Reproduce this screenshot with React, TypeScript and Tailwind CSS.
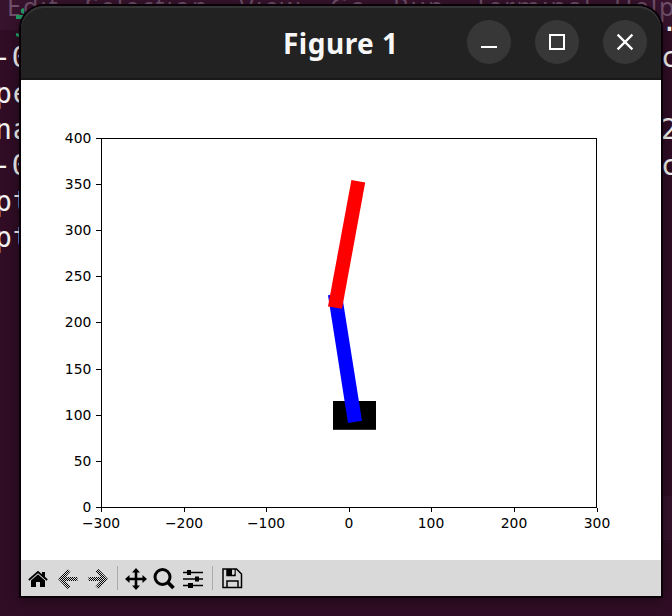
import React from "react";

const menu = [
  { label: "Edit", left: "left-[7px]" },
  { label: "Selection", left: "left-[85px]" },
  { label: "View", left: "left-[239px]" },
  { label: "Go", left: "left-[330px]" },
  { label: "Run", left: "left-[393px]" },
  { label: "Terminal", left: "left-[474px]" },
  { label: "Help", left: "left-[614px]" },
];

const code = [
  { text: "-0", pos: "left-[-6px] top-[40px]" },
  { text: "pe", pos: "left-[-5px] top-[76px]" },
  { text: "na", pos: "left-[-5px] top-[112px]" },
  { text: "-0", pos: "left-[-6px] top-[148px]" },
  { text: "pt", pos: "left-[-5px] top-[184px]" },
  { text: "pt", pos: "left-[-5px] top-[220px]" },
  { text: ".", pos: "left-[661px] top-[4px]" },
  { text: "c", pos: "left-[661px] top-[40px]" },
  { text: "2", pos: "left-[661px] top-[112px]" },
  { text: "c", pos: "left-[661px] top-[148px]" },
];

const yTicks = [0, 50, 100, 150, 200, 250, 300, 350, 400];
const xTicks = [-300, -200, -100, 0, 100, 200, 300];

function Backdrop() {
  return (
    <div className="absolute inset-0 bg-[#300d25]">
      <div className="h-[30px] bg-[#37132d]" />
      <div className="absolute right-0 top-[496px] h-[44px] w-[12px] bg-[#37132d]" />
      {menu.map((m) => (
        <span
          key={m.label}
          className={`absolute top-[-12px] whitespace-pre font-['Noto_Sans'] text-[25px] leading-[36px] tracking-[2px] text-[#70506a] ${m.left}`}
        >
          {m.label}
        </span>
      ))}
      <svg className="absolute left-[14px] top-[5px]" width="10" height="36" fill="#26a269">
        <circle cx="9.5" cy="6" r="2.7" />
        <path d="M2 10h7v4H2zM2 28l4 1 2 4-6-2z" />
      </svg>
      {code.map((c) => (
        <span
          key={c.pos}
          className={`absolute whitespace-pre font-['DejaVu_Sans_Mono',monospace] text-[28px] leading-[36px] tracking-[1px] text-[#f4f4f2] ${c.pos}`}
        >
          {c.text}
        </span>
      ))}
    </div>
  );
}

function TitleBar() {
  return (
    <header className="flex h-[74px] shrink-0 items-start justify-end gap-6 rounded-t-[23px] border-b-2 border-[#191919] bg-[#222222] pr-[14px] pt-[14px] shadow-[inset_0_2px_0_#353535]">
      <h1 className="mr-[44px] whitespace-pre pt-[3px] font-['Noto_Sans'] text-[28px] font-bold leading-[40px] text-[#f7f7f7]">
        <span className="inline-block w-[116px] tracking-[0.5px]">Figure 1</span>
      </h1>
      <button className="size-11 rounded-full bg-[#373737]">
        <svg width="44" height="44" fill="none" stroke="#fff" strokeWidth="2"><path d="M14 27h16" /></svg>
      </button>
      <button className="size-11 rounded-full bg-[#373737]">
        <svg width="44" height="44" fill="none" stroke="#fff" strokeWidth="2"><path d="M15 15h14v14H15z" /></svg>
      </button>
      <button className="size-11 rounded-full bg-[#373737]">
        <svg width="44" height="44" fill="none" stroke="#fff" strokeWidth="2.2"><path d="M14.6 14.6l14.8 14.8M29.4 14.6L14.6 29.4" /></svg>
      </button>
    </header>
  );
}

function Plot() {
  return (
    <svg className="block shrink-0 bg-white" width="640" height="480" viewBox="21 80 640 480">
      <rect x="333" y="401" width="43" height="28.8" />
      <path d="M328 295.2L341.7 293L362 420.8L348 423z" fill="#0000ff" />
      <path d="M351.4 180L365.2 182.5L342 308.8L328 306.5z" fill="#ff0000" />
      <path d="M101.5 138v370M596.5 138v370M101 138.5h496M101 507.500h496" fill="none" stroke="#000" />
      <g fontFamily="DejaVu Sans, sans-serif" fontSize="13.89">
        {yTicks.map((v) => {
          const y = Math.round(507 - v * 0.9233);
          return (
            <g key={v}>
              <path d={`M96 ${y + 0.5}h5`} stroke="#000" />
              <text x="91.3" y={y + 5} textAnchor="end">{v}</text>
            </g>
          );
        })}
        {xTicks.map((v) => {
          const x = Math.round(348.8 + v * 0.8258);
          return (
            <g key={v}>
              <path d={`M${x + 0.5} 508v4`} stroke="#000" />
              <text x={x} y="528" textAnchor="middle">{String(v).replace("-", "\u2212")}</text>
            </g>
          );
        })}
      </g>
    </svg>
  );
}

function Arrow({ flip = false }: { flip?: boolean }) {
  const id = flip ? "dots-forward" : "dots-back";
  return (
    <svg width="20" height="20" viewBox="0 0 20 20">
      <defs>
        <pattern id={id} width="2" height="2" patternUnits="userSpaceOnUse">
          <path d="M0 0h1v1H0zM1 1h1v1H1z" fill="#000" shapeRendering="crispEdges" />
        </pattern>
      </defs>
      <path
        d={flip ? "M20 10L10.500 0L7.500 2.500L12.500 8H0.500v4h12l-5 5.500l3 2.500z" : "M0 10L9.500 0L12.500 2.500L7.500 8h12v4h-12l5 5.500l-3 2.500z"}
        fill={`url(#${id})`}
      />
    </svg>
  );
}

function Toolbar() {
  return (
    <footer className="flex h-[36px] shrink-0 items-center bg-[#d9d9d9] pl-[7px]">
      <svg className="mt-px" width="20" height="20" viewBox="0 0 20 20">
        <path d="M10 5L17 11V18H12V13H8V18H3V11z" />
        <path d="M14 3h3v6l-3-3z" />
        <path d="M0.800 11L10 3L19.200 11" fill="none" stroke="#000" strokeWidth="1.700" />
        <path d="M2.500 11.500L10 5L17.500 11.500" fill="none" stroke="#d9d9d9" strokeWidth="0.700" />
      </svg>
      <div className="ml-[10px] mt-px h-5"><Arrow /></div>
      <div className="ml-[10px] mt-px h-5"><Arrow flip /></div>
      <div className="ml-[9px] h-6 w-px bg-[#aaa]" />
      <svg className="ml-[6px] mt-px" width="24" height="24" viewBox="0 0 24 24">
        <path d="M12 4v16M4 12h16" stroke="#000" strokeWidth="2.600" />
        <path d="M12 1l4 4.500H8zM12 23l4-4.500H8zM1 12l4.500-4v8zM23 12l-4.500-4v8z" />
      </svg>
      <svg className="ml-[5px] mt-px" width="22" height="22" viewBox="0 0 22 22" fill="none" stroke="#000">
        <circle cx="9.500" cy="9" r="7.500" strokeWidth="3" />
        <path d="M15 14.500l5.500 5.500" strokeWidth="3.800" />
      </svg>
      <svg className="ml-[8px] mt-px" width="20" height="20" viewBox="0 0 20 20">
        <path d="M0 3.500h20M0 10h20M0 16.500h20" stroke="#000" strokeWidth="1.400" />
        <path d="M4 1h4v5H4zM12 7.500h4v5h-4zM5 14h5v5H5z" />
      </svg>
      <div className="ml-[9px] h-6 w-px bg-[#aaa]" />
      <svg className="ml-[9px]" width="21" height="21" viewBox="0 0 21 21" fill="none" stroke="#000" strokeWidth="1.500">
        <path d="M1 1h13.500L19.500 6v13.500H1zM5 19v-6h11v6M13 1v6.500H5V1" />
        <path d="M5 1h5v6H5z" fill="#000" stroke="none" />
        <path d="M10.500 2h2v4h-2z" fill="#d9d9d9" stroke="none" />
      </svg>
    </footer>
  );
}

export default function App() {
  return (
    <main className="relative h-[616px] w-[672px] overflow-hidden">
      <Backdrop />
      <section className="absolute left-[21px] top-[6px] flex h-[590px] w-[640px] flex-col rounded-t-[23px] shadow-[0_0_0_2px_#080006,0_2px_14px_2px_rgba(0,0,0,0.4)]">
        <TitleBar />
        <Plot />
        <Toolbar />
      </section>
    </main>
  );
}
